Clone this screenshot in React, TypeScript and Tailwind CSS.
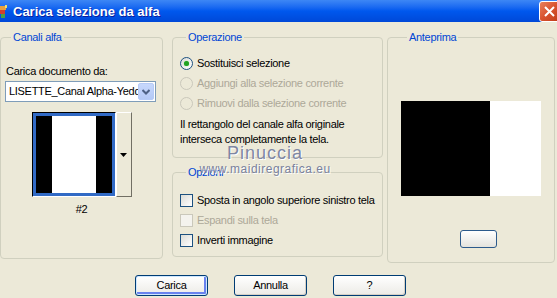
import type { ReactNode } from "react";

const FONT = "font-['Liberation_Sans',Arial,sans-serif]";

function Group({
  label,
  className,
  children,
}: {
  label: string;
  className: string;
  children?: ReactNode;
}) {
  return (
    <fieldset className={`border border-[#D0D0BF] rounded-[4px] ${className}`}>
      <legend className="ml-[6px] px-[2px] text-[#0046D5] text-[11px] leading-[13px]">
        {label}
      </legend>
      {children}
    </fieldset>
  );
}

function Radio({ label, checked, disabled }: { label: string; checked?: boolean; disabled?: boolean }) {
  return (
    <div className="flex items-center h-[20px] whitespace-nowrap">
      <span
        className={`w-[13px] h-[13px] rounded-full border flex items-center justify-center ${
          disabled
            ? "border-[#CAC8BB] bg-[#ECE9D8]"
            : "border-[#1C5180] bg-gradient-to-br from-[#DCDCD6] to-white"
        }`}
      >
        {checked && <span className="w-[5px] h-[5px] rounded-full bg-[#21A121] shadow-[0_0_1px_#55D355]" />}
      </span>
      <span className={`ml-[4px] ${disabled ? "text-[#ACA899]" : "text-black"}`}>{label}</span>
    </div>
  );
}

function Check({ label, disabled }: { label: string; disabled?: boolean }) {
  return (
    <div className="flex items-center h-[20px] whitespace-nowrap">
      <span
        className={`w-[13px] h-[13px] border ${
          disabled
            ? "border-[#CAC8BB] bg-[#F4F3EE]"
            : "border-[#1C5180] bg-gradient-to-br from-[#DCDCD6] to-white"
        }`}
      />
      <span className={`ml-[4px] ${disabled ? "text-[#ACA899]" : "text-black"}`}>{label}</span>
    </div>
  );
}

function XpButton({ children, primary }: { children?: ReactNode; primary?: boolean }) {
  return (
    <button
      className={`w-[73px] h-[21px] rounded-[3px] border border-[#003C74] bg-gradient-to-b from-white to-[#ECEBE6] text-[11px] text-black ${
        primary ? "shadow-[inset_0_0_0_1px_#CEE7FF,inset_-1px_-1px_0_2px_#6982EE]" : "shadow-[inset_-1px_-1px_0_#D6D0C5]"
      }`}
    >
      {children}
    </button>
  );
}

export default function App() {
  return (
    <div className={`relative w-[557px] h-[298px] overflow-hidden bg-[#ECE9D8] ${FONT} text-[11px] leading-[13px] tracking-[-0.3px]`}>
      {/* title bar */}
      <div className="flex items-center h-[22px] bg-gradient-to-b from-[#3D87F5] via-[#0058EE] to-[#0048D8] tracking-normal">
        <svg width="8" height="16" viewBox="0 0 8 16" className="mt-[1px]">
          <rect x="0" y="2" width="6" height="4" fill="#E8A040" />
          <rect x="0" y="6" width="5" height="4" fill="#D04030" />
          <rect x="1" y="10" width="4" height="4" fill="#48A048" />
          <rect x="5" y="1" width="2" height="3" fill="#F0E070" />
        </svg>
        <span className="ml-[5px] text-white font-bold text-[13px] [text-shadow:1px_1px_0_#0A1E9E]">
          Carica selezione da alfa
        </span>
        <div className="ml-auto -mr-[3px] mt-[1px] w-[21px] h-[21px] rounded-[3px] border border-white bg-gradient-to-br from-[#E8805A] via-[#D8522E] to-[#C03C18] flex items-center justify-center">
          <svg width="11" height="11" viewBox="0 0 11 11">
            <path d="M1 1 L10 10 M10 1 L1 10" stroke="white" strokeWidth="2" />
          </svg>
        </div>
      </div>

      {/* groups */}
      <div className="flex pt-[9px]">
        <Group label="Canali alfa" className="w-[163px] h-[228px] px-[4px]">
          <div className="mt-[21px] ml-[1px]">Carica documento da:</div>
          <div className="mt-[3px] w-[151px] h-[21px] border border-[#7F9DB9] bg-white flex items-center">
            <span className="ml-[3px] flex-1 overflow-hidden whitespace-nowrap">LISETTE_Canal Alpha-Yedda</span>
            <span className="w-[16px] h-[17px] mr-[1px] rounded-[2px] bg-gradient-to-b from-[#C7D8FD] to-[#B4C9F6] border border-[#B6CBF7] flex items-center justify-center">
              <svg width="8" height="6" viewBox="0 0 8 6">
                <path d="M0.5 1 L4 4.5 L7.5 1" fill="none" stroke="#4D6185" strokeWidth="2" />
              </svg>
            </span>
          </div>
          <div className="mt-[10px] flex justify-center">
            <div className="flex">
              <div className="w-[84px] h-[85px] border border-black border-r-white border-b-white">
                <div className="w-full h-full border-[3px] border-[#316AC5] flex">
                  <div className="w-[16px] bg-black" />
                  <div className="flex-1 bg-white" />
                  <div className="w-[16px] bg-black" />
                </div>
              </div>
              <div className="w-[16px] h-[85px] border border-white border-r-[#716F64] border-b-[#716F64] flex items-center justify-center">
                <svg width="7" height="4" viewBox="0 0 7 4">
                  <path d="M0 0 H7 L3.5 4 Z" fill="black" />
                </svg>
              </div>
            </div>
          </div>
          <div className="mt-[6px] text-center">#2</div>
        </Group>

        <div className="ml-[9px] flex flex-col gap-[8px]">
          <Group label="Operazione" className="w-[211px] h-[127px] px-[7px]">
            <div className="mt-[9px]">
              <Radio label="Sostituisci selezione" checked />
              <Radio label="Aggiungi alla selezione corrente" disabled />
              <Radio label="Rimuovi dalla selezione corrente" disabled />
            </div>
            <p className="mt-[4px] leading-[15px]">
              Il rettangolo del canale alfa originale
              <br />
              interseca completamente la tela.
            </p>
          </Group>
          <Group label="Opzioni" className="w-[211px] h-[91px] px-[7px]">
            <div className="mt-[11px]">
              <Check label="Sposta in angolo superiore sinistro tela" />
              <Check label="Espandi sulla tela" disabled />
              <Check label="Inverti immagine" />
            </div>
          </Group>
        </div>

        <Group label="Anteprima" className="ml-[4px] w-[164px] h-[232px] px-[13px]">
          <div className="mt-[57px] flex h-[95px]">
            <div className="w-[89px] bg-black" />
            <div className="w-[51px] bg-white" />
          </div>
          <div className="mt-[34px] ml-[59px] w-[37px] h-[18px] rounded-[3px] border border-[#2C5A8C] bg-gradient-to-b from-white to-[#E4E3DD]" />
        </Group>
      </div>

      {/* dialog buttons */}
      <div className="mt-[12px] ml-[135px] flex gap-[26px]">
        <XpButton primary>Carica</XpButton>
        <XpButton>Annulla</XpButton>
        <XpButton>?</XpButton>
      </div>

      {/* watermark */}
      <div className="absolute left-[198px] top-[144px] w-[134px] flex flex-col items-center pointer-events-none tracking-normal">
        <span className="text-[18px] leading-[19px] tracking-[1px] text-[#7F87A3] [text-shadow:1px_1px_0_#fff]">
          Pinuccia
        </span>
        <span className="text-[12px] leading-[13px] tracking-[0.5px] text-[#79819C] [text-shadow:1px_1px_0_#fff]">
          www.maidiregrafica.eu
        </span>
      </div>
    </div>
  );
}
